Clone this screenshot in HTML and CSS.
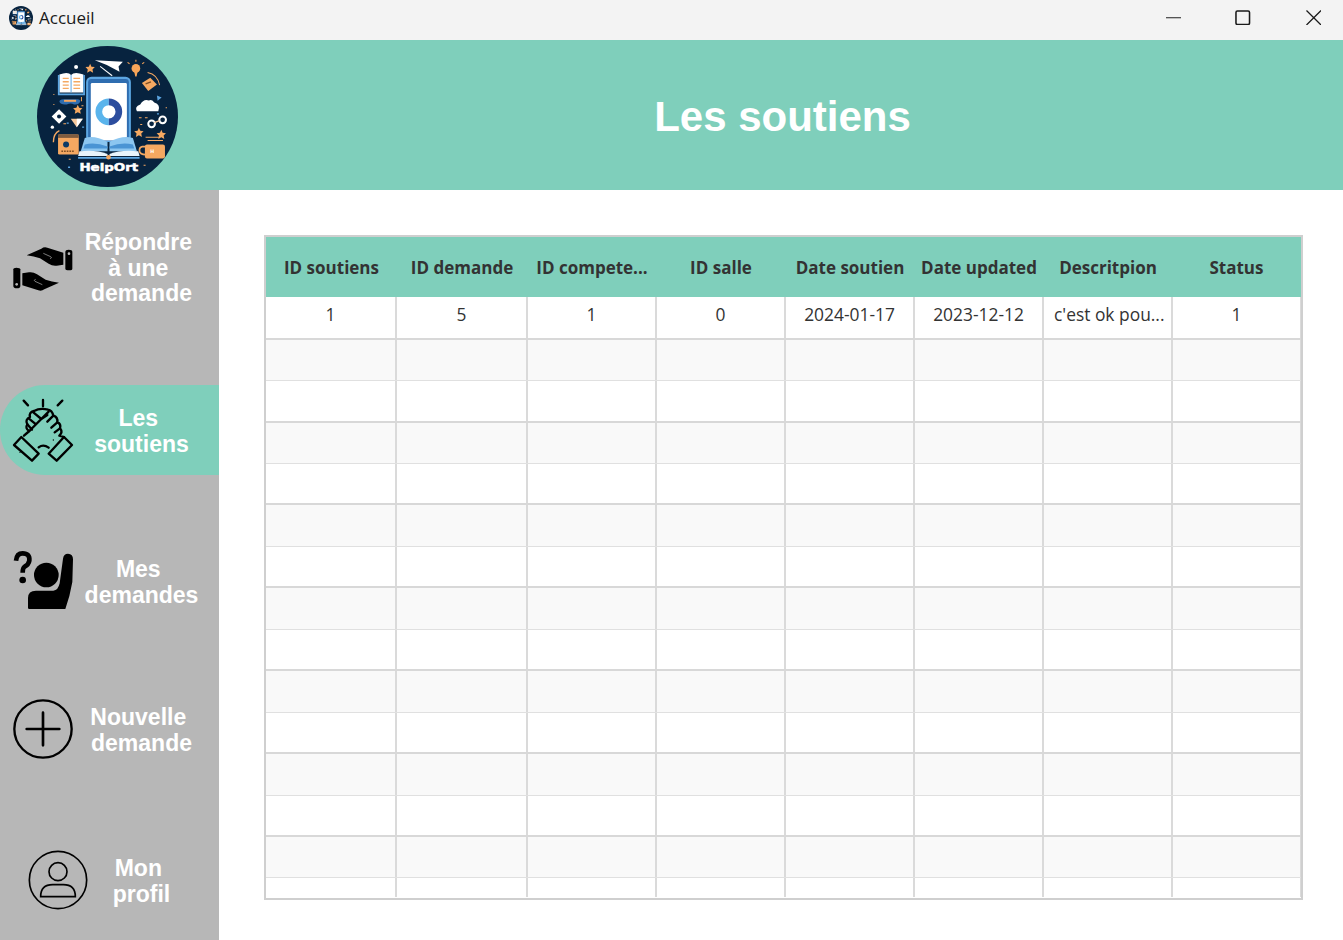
FILE: index.html
```html
<!DOCTYPE html>
<html lang="fr">
<head>
<meta charset="utf-8">
<title>Accueil</title>
<link rel="stylesheet" href="styles.css">
</head>
<body>
<div class="window">
  <div class="titlebar">
    <svg class="app-icon" viewBox="111 137 422 422"><use href="#logo-art"/></svg>
    <span class="app-name">Accueil</span>
    <div class="controls">
      <svg class="ctl" viewBox="0 0 16 16"><path d="M0 8H15.5" stroke="#1a1a1a" stroke-width="1"/></svg>
      <svg class="ctl ctl-max" viewBox="0 0 16 16"><rect x="1" y="1" width="14" height="14" rx="1.5" fill="none" stroke="#1a1a1a" stroke-width="1.6"/></svg>
      <svg class="ctl ctl-close" viewBox="0 0 16 16"><path d="M.5 .5L15.5 15.5M15.5 .5L.5 15.5" stroke="#1a1a1a" stroke-width="1.3"/></svg>
    </div>
  </div>

  <header class="banner">
    <svg class="logo" viewBox="111 137 422 422">
      <defs>
        <g id="logo-art">
          <circle cx="322" cy="348" r="211" fill="#07233f"/>
          <!-- phone -->
          <rect x="258" y="229" width="134" height="195" rx="16" fill="#5ca6e2"/>
          <rect x="264" y="236" width="122" height="185" rx="10" fill="#2f6db0"/>
          <rect x="272" y="248" width="108" height="172" rx="4" fill="#fff"/>
          <path d="M326 294A40 40 0 0 0 326 374V354A20 20 0 0 1 326 314Z" fill="#5ab4ec"/>
          <path d="M326 294A40 40 0 0 1 326 374V354A20 20 0 0 0 326 314Z" fill="#2c4d9e"/>
          <!-- bottom book -->
          <path d="M322 424Q285 404 254 412L242 452H322Z" fill="#8cc6f0"/>
          <path d="M328 424Q365 404 398 412L410 452H328Z" fill="#8cc6f0"/>
          <path d="M322 438Q285 424 254 432L250 444H322Z" fill="#4a94d4"/>
          <path d="M328 438Q365 424 398 432L402 444H328Z" fill="#4a94d4"/>
          <path d="M238 452Q285 446 322 460V466H234Z" fill="#e8f4fc"/>
          <path d="M414 452Q365 446 328 460V466H418Z" fill="#e8f4fc"/>
          <path d="M234 472H418" stroke="#5ca6e2" stroke-width="5"/>
          <circle cx="325" cy="470" r="7" fill="#f5a861"/>
          <!-- plane -->
          <path d="M284 180L368 184L355 198L358 214L320 194Z" fill="#fff"/>
          <path d="M300 198L336 226" stroke="#fff" stroke-width="3"/>
          <!-- bulb -->
          <circle cx="407" cy="204" r="13" fill="#f7a559"/>
          <path d="M402 214H412L409 228H405Z" fill="#f7a559"/>
          <path d="M388 190l-6-4M426 190l6-4M407 184v-6" stroke="#f7a559" stroke-width="3"/>
          <!-- stars -->
          <path id="logo-star" d="M270 190l4 9 10 1-7 7 2 10-9-5-9 5 2-10-7-7 10-1Z" fill="#f5a861"/>
          <use href="#logo-star" x="-37" y="123"/>
          <use href="#logo-star" x="146" y="192"/>
          <use href="#logo-star" x="213" y="198"/>
          <!-- open book -->
          <path d="M178 222Q205 212 213 224Q222 212 250 222V276H178Z" fill="#fff"/>
          <path d="M176 224V282H252V224" fill="none" stroke="#5ca6e2" stroke-width="5"/>
          <path d="M188 234H206M188 244H206M188 254H206M188 264H206M220 234H240M220 244H240M220 254H240M220 264H240" stroke="#f5a861" stroke-width="4"/>
          <path d="M213 224V276" stroke="#5ca6e2" stroke-width="3"/>
          <circle cx="228" cy="200" r="6" fill="#fff"/>
          <!-- glasses -->
          <path d="M178 304Q178 296 190 296H232Q242 296 240 304Q236 314 222 312Q212 306 200 312Q182 314 178 304Z" fill="#2f6db0"/>
          <path d="M192 298H228V304H192Z" fill="#f5a861"/>
          <!-- sparkle -->
          <path d="M177 326L199 348L177 370L155 348Z" fill="#fff"/>
          <circle cx="177" cy="348" r="6" fill="#07233f"/>
          <circle cx="157" cy="380" r="5" fill="#fff"/>
          <!-- funnel -->
          <path d="M212 355H248L230 380Z" fill="#f5c79b"/>
          <path d="M230 355H248L230 380Z" fill="#fff"/>
          <!-- notebook -->
          <path d="M160 425Q160 398 178 390" fill="none" stroke="#f5a861" stroke-width="4"/>
          <rect x="174" y="402" width="62" height="60" rx="4" fill="#f5a861"/>
          <rect x="174" y="402" width="62" height="10" fill="#7f5c3f"/>
          <circle cx="198" cy="432" r="9" fill="#0e3a66"/>
          <path d="M184 452H224" stroke="#7f4f24" stroke-width="4" stroke-dasharray="5 3"/>
          <!-- cup -->
          <rect x="434" y="432" width="60" height="42" rx="6" fill="#f5a861"/>
          <path d="M436 438H426Q416 440 418 452Q420 462 436 462" fill="none" stroke="#f5a861" stroke-width="5"/>
          <path d="M436 410H476M442 420H488" stroke="#f5a861" stroke-width="3"/>
          <text class="logo-h" x="456" y="458">H</text>
          <!-- parcel -->
          <path d="M425 248L450 232L470 252L444 272Z" fill="#f5a861"/>
          <path d="M436 250L452 244" stroke="#7f4f24" stroke-width="4"/>
          <path d="M442 216Q472 222 478 254" fill="none" stroke="#f5a861" stroke-width="3"/>
          <!-- cloud -->
          <path d="M410 332Q402 318 420 312Q430 294 446 300Q454 296 462 306Q482 312 474 332Z" fill="#fff"/>
          <path d="M470 285l14 6-12 10Z" fill="#5ca6e2"/>
          <!-- links -->
          <circle cx="454" cy="370" r="10" fill="none" stroke="#fff" stroke-width="6"/>
          <circle cx="487" cy="358" r="10" fill="none" stroke="#fff" stroke-width="6"/>
          <path d="M462 366L478 360" stroke="#f5c79b" stroke-width="4"/>
          <!-- dots -->
          <path d="M160 282h3M160 312h3M244 290v12M416 352h8M434 352h8M420 372h6M496 322h4M206 476h6M190 370h8M430 494h6M244 316h6" stroke="#f5a861" stroke-width="3"/>
          <path d="M200 368h6M246 380h6M204 500h6M470 340h6" stroke="#5ca6e2" stroke-width="4"/>
        </g>
      </defs>
      <use href="#logo-art"/>
      <text class="logo-text" x="326" y="512" textLength="176" lengthAdjust="spacingAndGlyphs">HelpOrt</text>
    </svg>
    <h1 class="page-title">Les soutiens</h1>
  </header>

  <div class="body">
    <nav class="sidebar">
      <a class="nav-item nav-1">
        <svg class="nav-icon" viewBox="0 0 210 210">
          <g transform="translate(0 21)">
            <g id="hand">
              <path d="M56 46L100 26Q108 20 118 23L166 38V74L146 77Q134 79 122 71L96 55Q78 49 56 46Z" fill="#000"/>
              <path d="M106 40L128 50Q134 53 126 56" fill="none" stroke="#b7b7b7" stroke-width="2"/>
              <path d="M172 36Q172 29 182 29Q193 29 193 36V86Q193 91 184 91Q172 91 172 86Z" fill="#000"/>
              <circle cx="183" cy="41" r="4" fill="#b7b7b7"/>
            </g>
            <use href="#hand" transform="rotate(180 104.500 87)"/>
          </g>
        </svg>
        <span class="nav-label">Répondre&nbsp;<br>à une&nbsp;<br>demande</span>
      </a>
      <a class="nav-item nav-2 active">
        <svg class="nav-icon" viewBox="0 0 210 210" fill="none" stroke="#000" stroke-width="7" stroke-linecap="round" stroke-linejoin="round">
          <path d="M47 17L60 31M105 15V34M163 17L149 31"/>
          <path d="M18 150L40 126L92 176L72 197Z"/>
          <path d="M192 150L168 126L122 176L146 197Z"/>
          <path d="M48 122L64 108Q50 100 58 88Q50 74 66 66Q62 52 78 48Q96 38 120 44Q132 46 136 62Q150 66 148 82Q160 86 156 100Q166 112 154 122L168 126"/>
          <path d="M92 157Q106 146 122 158"/>
          <path d="M64 108L122 50M76 52L100 72M62 70L84 88M58 88L72 104M136 62L118 80M148 82L130 98M156 100L140 112M100 72L118 60"/>
          <path d="M36 172h0M136 135h0" stroke-width="4"/>
        </svg>
        <span class="nav-label">Les&nbsp;<br>soutiens</span>
      </a>
      <a class="nav-item nav-3">
        <svg class="nav-icon" viewBox="0 0 210 210">
          <path d="M24 44Q26 22 44 22Q66 22 64 44Q62 56 50 62Q44 66 44 80" fill="none" stroke="#000" stroke-width="14"/>
          <circle cx="44" cy="102" r="10" fill="#000"/>
          <circle cx="115" cy="87" r="37" fill="#000"/>
          <path d="M60 186V156Q60 134 84 134H136Q150 134 155 112L165 38Q167 23 180 23Q195 24 195 40L193 108Q186 150 172 189H64Q60 189 60 186Z" fill="#000"/>
        </svg>
        <span class="nav-label">Mes&nbsp;<br>demandes</span>
      </a>
      <a class="nav-item nav-4">
        <svg class="nav-icon" viewBox="0 0 210 210" fill="none" stroke="#000" stroke-linecap="round">
          <circle cx="105" cy="105" r="86" stroke-width="7"/>
          <path d="M56 105H154M105 56V154" stroke-width="8"/>
        </svg>
        <span class="nav-label">Nouvelle&nbsp;<br>demande</span>
      </a>
      <a class="nav-item nav-5">
        <svg class="nav-icon" viewBox="45 0 210 210" fill="none" stroke="#000" stroke-width="5">
          <circle cx="150" cy="105" r="86"/>
          <circle cx="150" cy="80" r="27"/>
          <path d="M98 155Q98 119 134 119H166Q202 119 202 155Z"/>
        </svg>
        <span class="nav-label">Mon&nbsp;<br>profil</span>
      </a>
    </nav>

    <main class="content">
      <div class="table">
        <div class="row head">
          <div class="cell">ID soutiens</div>
          <div class="cell cell-nudge">ID demande</div>
          <div class="cell cell-nudge">ID compete...</div>
          <div class="cell cell-nudge">ID salle</div>
          <div class="cell cell-nudge">Date soutien</div>
          <div class="cell cell-nudge">Date updated</div>
          <div class="cell cell-nudge">Descritpion</div>
          <div class="cell cell-nudge">Status</div>
        </div>
        <div class="rows">
          <div class="row data odd">
            <div class="cell">1</div>
            <div class="cell">5</div>
            <div class="cell">1</div>
            <div class="cell">0</div>
            <div class="cell">2024-01-17</div>
            <div class="cell">2023-12-12</div>
            <div class="cell left">c'est ok pou...</div>
            <div class="cell">1</div>
          </div>
          <div class="row data even"><div class="cell"></div><div class="cell"></div><div class="cell"></div><div class="cell"></div><div class="cell"></div><div class="cell"></div><div class="cell"></div><div class="cell"></div></div>
          <div class="row data odd"><div class="cell"></div><div class="cell"></div><div class="cell"></div><div class="cell"></div><div class="cell"></div><div class="cell"></div><div class="cell"></div><div class="cell"></div></div>
          <div class="row data even"><div class="cell"></div><div class="cell"></div><div class="cell"></div><div class="cell"></div><div class="cell"></div><div class="cell"></div><div class="cell"></div><div class="cell"></div></div>
          <div class="row data odd"><div class="cell"></div><div class="cell"></div><div class="cell"></div><div class="cell"></div><div class="cell"></div><div class="cell"></div><div class="cell"></div><div class="cell"></div></div>
          <div class="row data even"><div class="cell"></div><div class="cell"></div><div class="cell"></div><div class="cell"></div><div class="cell"></div><div class="cell"></div><div class="cell"></div><div class="cell"></div></div>
          <div class="row data odd"><div class="cell"></div><div class="cell"></div><div class="cell"></div><div class="cell"></div><div class="cell"></div><div class="cell"></div><div class="cell"></div><div class="cell"></div></div>
          <div class="row data even"><div class="cell"></div><div class="cell"></div><div class="cell"></div><div class="cell"></div><div class="cell"></div><div class="cell"></div><div class="cell"></div><div class="cell"></div></div>
          <div class="row data odd"><div class="cell"></div><div class="cell"></div><div class="cell"></div><div class="cell"></div><div class="cell"></div><div class="cell"></div><div class="cell"></div><div class="cell"></div></div>
          <div class="row data even"><div class="cell"></div><div class="cell"></div><div class="cell"></div><div class="cell"></div><div class="cell"></div><div class="cell"></div><div class="cell"></div><div class="cell"></div></div>
          <div class="row data odd"><div class="cell"></div><div class="cell"></div><div class="cell"></div><div class="cell"></div><div class="cell"></div><div class="cell"></div><div class="cell"></div><div class="cell"></div></div>
          <div class="row data even"><div class="cell"></div><div class="cell"></div><div class="cell"></div><div class="cell"></div><div class="cell"></div><div class="cell"></div><div class="cell"></div><div class="cell"></div></div>
          <div class="row data odd"><div class="cell"></div><div class="cell"></div><div class="cell"></div><div class="cell"></div><div class="cell"></div><div class="cell"></div><div class="cell"></div><div class="cell"></div></div>
          <div class="row data even"><div class="cell"></div><div class="cell"></div><div class="cell"></div><div class="cell"></div><div class="cell"></div><div class="cell"></div><div class="cell"></div><div class="cell"></div></div>
          <div class="row data odd"><div class="cell"></div><div class="cell"></div><div class="cell"></div><div class="cell"></div><div class="cell"></div><div class="cell"></div><div class="cell"></div><div class="cell"></div></div>
        </div>
      </div>
    </main>
  </div>
</div>
</body>
</html>
```

FILE: styles.css
```css
* { box-sizing: border-box; }
html, body { margin: 0; padding: 0; height: 100%; overflow: hidden; }
body { font-family: "Liberation Sans", Arial, sans-serif; background: #fff; }

.window { display: flex; flex-direction: column; width: 1343px; height: 940px; }

.titlebar {
  display: flex; align-items: center; flex: 0 0 40px;
  background: #f3f3f3; padding-left: 9px; padding-bottom: 5px;
}
.app-icon { width: 24px; height: 24px; }
.app-name {
  margin-left: 6px; margin-top: -1px; font: 17px "Open Sans", "Noto Sans", sans-serif; color: #1a1a1a;
}
.controls { display: flex; align-items: center; margin-left: auto; padding-right: 22px; gap: 54px; }
.ctl { width: 15.5px; height: 15.5px; display: block; }
.ctl-close { margin-left: 1px; }

.banner {
  position: relative; flex: 0 0 150px; background: #7fcfbb;
  display: flex; align-items: center; justify-content: center; padding-left: 222px;
}
.logo { position: absolute; left: 37px; top: 5.500px; width: 141px; height: 141px; }
.logo-text {
  font: bold 31px "DejaVu Sans", sans-serif; fill: #fff; stroke: #fff; stroke-width: 1.5px; text-anchor: middle;
}
.logo-h { font: bold 14px "DejaVu Sans", sans-serif; fill: #fff; text-anchor: middle; }
.page-title {
  margin: 4px 0 0; font-size: 42px; font-weight: 700; color: #fff;
}

.body { flex: 1; display: flex; min-height: 0; }

.sidebar {
  flex: 0 0 219px; background: #b7b7b7; display: flex; flex-direction: column;
}
.nav-item {
  display: flex; align-items: center; height: 90px; padding-left: 8px; flex: none;
  color: #fff;
}
.nav-1 { margin-top: 33px; }
.nav-2 { margin-top: 72px; }
.nav-3 { margin-top: 61px; }
.nav-4 { margin-top: 58px; }
.nav-5 { margin-top: 61px; }
.nav-5 .nav-icon { margin-left: 15px; margin-right: -15px; }
.active { background: #7fcfbb; border-radius: 45px 0 0 45px; }
.nav-icon { flex: none; width: 70px; height: 70px; display: block; }
.nav-label {
  flex: none; width: 127px; padding-top: 4px; text-align: center; font-size: 23px; font-weight: 700; line-height: 25.600px;
}
.nav-1 .nav-label { padding-top: 1px; }

.content { flex: 1; padding: 45px 40px 40px 45px; min-width: 0; }
.table {
  display: flex; flex-direction: column; height: 665px; border: 2px solid #cfcfcf;
  font-family: "Open Sans", "Noto Sans", sans-serif; color: #333; background: #fff;
}
.rows { flex: 1; overflow: hidden; margin-bottom: 1px; min-height: 0; }
.row {
  display: grid; grid-template-columns: 131px 131px 129px 129px 129px 129px 129px 128px;
}
.head { flex: 0 0 60px; background: #7fcfbb; font-size: 17px; font-weight: 700; }
.head .cell { display: flex; align-items: center; justify-content: center; white-space: nowrap; }
.head .cell-nudge { padding-right: 1px; }
.data { height: 41.460px; font-size: 17.400px; }
.data:first-child { height: 42.600px; }
.data .cell { text-align: center; padding: 5px 0 0; border-right: 2px solid #dadada; white-space: nowrap; }
.data .cell:last-child { border-right-width: 1px; }
.data .left { text-align: left; padding-left: 10px; }
.odd { background: #fff; border-bottom: 2px solid #d8d8d8; }
.even { background: #f9f9f9; border-bottom: 1px solid #e0e0e0; }
```
